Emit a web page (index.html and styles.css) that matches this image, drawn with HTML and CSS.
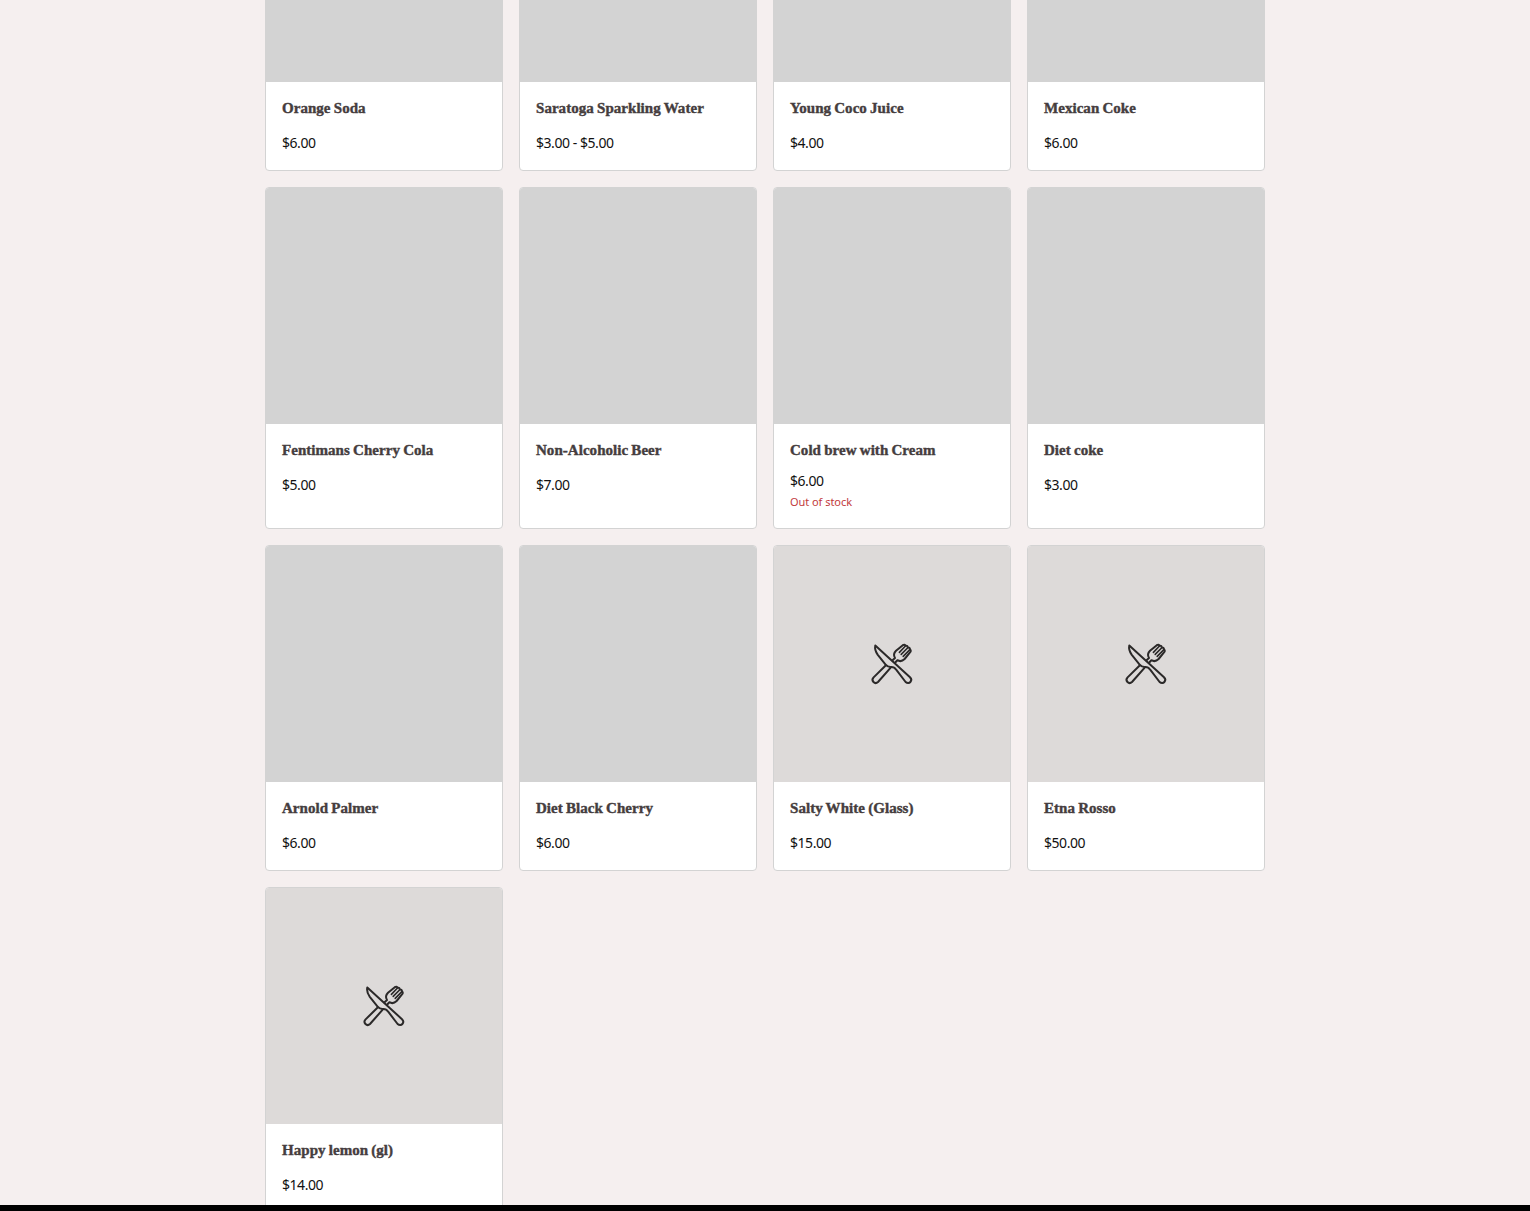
FILE: index.html
```
<!DOCTYPE html>
<html lang="en">
<head>
<meta charset="utf-8">
<title>Drinks</title>
<link rel="stylesheet" href="styles.css">
</head>
<body>
<svg width="0" height="0" class="sprite" aria-hidden="true">
  <symbol id="utensils" viewBox="0 0 60 60">
    <g fill="none" stroke="#2b2929" stroke-width="2" stroke-linejoin="round" stroke-linecap="round">
      <path d="M13.3 11.4 L48 43.2 C51.2 46.4 47.2 51.2 43.6 48 L34.2 35.7 Q32.2 32.8 29 33 Q25.8 33.3 23.4 30.4 L15.8 20.8 Q12.3 16 13.3 11.4 Z"/>
      <path d="M23.4 31.8 L11.6 43.4 C8.6 46.6 12.8 51 16 48 L28.7 33.6"/>
      <path d="M30.3 26.4 L33 24 C31 20.8 32.2 18.6 34 16.8 L40.8 11.2 Q42.6 10 43.7 11.8 Q45.7 11.4 45.8 13.6 Q48.2 13.4 47.9 15.4 Q49.6 16.6 48 18.4 L42.6 25 C40 27.6 37.6 27.6 35.4 26.2 L33 28.8"/>
      <path stroke-width="1.6" d="M43.7 11.8 L37.4 18.4 M45.8 13.8 L39.2 20.4 M47.9 15.6 L41.2 22.4"/>
    </g>
  </symbol>
</svg>
<main class="menu">
  <div class="grid">
    <article class="card"><div class="photo"></div><div class="info"><h3 class="name">Orange Soda</h3><p class="price">$6.00</p></div></article>
    <article class="card"><div class="photo"></div><div class="info"><h3 class="name">Saratoga Sparkling Water</h3><p class="price">$3.00 - $5.00</p></div></article>
    <article class="card"><div class="photo"></div><div class="info"><h3 class="name">Young Coco Juice</h3><p class="price">$4.00</p></div></article>
    <article class="card"><div class="photo"></div><div class="info"><h3 class="name">Mexican Coke</h3><p class="price">$6.00</p></div></article>
    <article class="card"><div class="photo"></div><div class="info"><h3 class="name">Fentimans Cherry Cola</h3><p class="price">$5.00</p></div></article>
    <article class="card"><div class="photo"></div><div class="info"><h3 class="name">Non-Alcoholic Beer</h3><p class="price">$7.00</p></div></article>
    <article class="card sold-out"><div class="photo"></div><div class="info"><h3 class="name">Cold brew with Cream</h3><p class="price">$6.00</p><p class="stock">Out of stock</p></div></article>
    <article class="card"><div class="photo"></div><div class="info"><h3 class="name">Diet coke</h3><p class="price">$3.00</p></div></article>
    <article class="card"><div class="photo"></div><div class="info"><h3 class="name">Arnold Palmer</h3><p class="price">$6.00</p></div></article>
    <article class="card"><div class="photo"></div><div class="info"><h3 class="name">Diet Black Cherry</h3><p class="price">$6.00</p></div></article>
    <article class="card"><div class="photo empty"><svg class="icon"><use href="#utensils"/></svg></div><div class="info"><h3 class="name">Salty White (Glass)</h3><p class="price">$15.00</p></div></article>
    <article class="card"><div class="photo empty"><svg class="icon"><use href="#utensils"/></svg></div><div class="info"><h3 class="name">Etna Rosso</h3><p class="price">$50.00</p></div></article>
    <article class="card"><div class="photo empty"><svg class="icon"><use href="#utensils"/></svg></div><div class="info"><h3 class="name">Happy lemon (gl)</h3><p class="price">$14.00</p></div></article>
  </div>
</main>
<footer class="bar"></footer>
</body>
</html>
```
FILE: styles.css
```
* { box-sizing: border-box; }
body { margin: 0; background: #f5efef; font-family: "Noto Sans", sans-serif; overflow: hidden; }
.sprite { display: block; }
.menu { height: 1205px; overflow: hidden; }
.grid { width: 1000px; margin: -155px auto 0; display: grid; grid-template-columns: repeat(4, 238px); gap: 16px; }
.card { background: #fff; border: 1px solid #d3d3d3; border-radius: 4px; overflow: hidden; }
.photo { height: 236px; background: #d3d3d3; }
.photo.empty { background: #dddad9; display: flex; align-items: center; justify-content: center; }
.icon { width: 60px; height: 60px; }
.info { padding: 16px; }
.name { margin: 0; font: bold 15px/20px "Liberation Serif", serif; letter-spacing: 0.04px; word-spacing: -0.6px; color: #453d3e; -webkit-text-stroke: 0.4px #453d3e; white-space: nowrap; }
.price { margin: 14px 0 0; font-size: 14px; line-height: 22px; letter-spacing: -0.45px; color: #111; }
.sold-out .price { margin-top: 10px; }
.stock { margin: 0; font-size: 11px; line-height: 20px; letter-spacing: -0.05px; color: #c23b3b; }
.bar { height: 6px; background: #000; }
```
